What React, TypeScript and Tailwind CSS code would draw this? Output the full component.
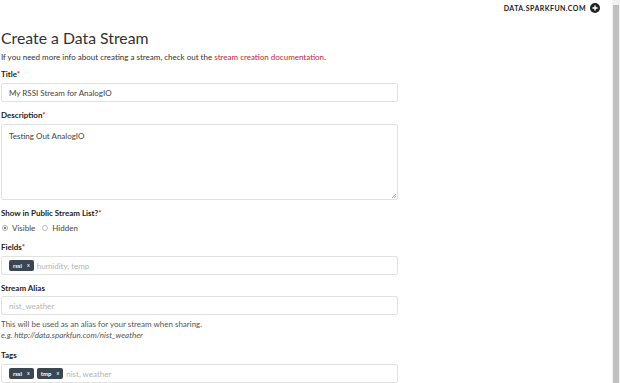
import { type ReactNode } from 'react';

const FONT = { fontFamily: 'Lato, "Noto Sans", sans-serif' };

function Label({ children, required }: { children: ReactNode; required?: boolean }) {
  return (
    <div className="text-[8px] font-bold leading-[10px] text-[#222]">
      {children}
      {required ? <span className="text-[#d9261c]">*</span> : null}
    </div>
  );
}

function Tag({ name }: { name: string }) {
  return (
    <span className="flex h-[11px] items-center gap-[5px] rounded-[2px] bg-[#3b4650] px-[4px] text-[6px] font-bold leading-none text-white">
      {name}
      <span className="text-[5.5px] font-normal">x</span>
    </span>
  );
}

function TagBox({ tags, placeholder }: { tags: string[]; placeholder: string }) {
  return (
    <div className="flex h-[19px] w-[397px] items-center gap-[3px] rounded-[2px] border border-[#e2e2e2] px-[7px]">
      {tags.map((t) => (
        <Tag key={t} name={t} />
      ))}
      <span className="text-[8px] text-[#b5b5b5]">{placeholder}</span>
    </div>
  );
}

export default function App() {
  return (
    <div className="relative flex h-[383px] w-[620px] overflow-hidden bg-white" style={FONT}>
      <div className="flex-1">
        <div className="flex h-[15px] items-center justify-end gap-[4px] pr-[12px] pt-[1px]">
          <span className="text-[7px] font-bold tracking-[0.45px] text-[#222]">DATA.SPARKFUN.COM</span>
          <svg width="10" height="10" viewBox="0 0 10 10">
            <circle cx="5" cy="5" r="5" fill="#222" />
            <path d="M5 2.4v5.2M2.4 5h5.2" stroke="#fff" strokeWidth="1.5" />
          </svg>
        </div>
        <div className="pl-[1px]">
          <h1 className="mt-[12px] text-[15.8px] font-normal leading-[22px] text-[#333]">Create a Data Stream</h1>
          <p className="mt-[3px] text-[8px] leading-[10px] text-[#333]">
            If you need more info about creating a stream, check out the{' '}
            <span className="text-[#c0272d]">stream creation documentation</span>.
          </p>

          <div className="mt-[7px]">
            <Label required>Title</Label>
          </div>
          <div className="mt-[4px] flex h-[19px] w-[397px] items-center rounded-[2px] border border-[#e2e2e2] px-[7px] text-[8px] text-[#444]">
            My RSSI Stream for AnalogIO
          </div>

          <div className="mt-[8px]">
            <Label required>Description</Label>
          </div>
          <div className="relative mt-[4px] h-[76px] w-[397px] rounded-[2px] border border-[#e2e2e2] px-[7px] pt-[5px] text-[8px] text-[#444]">
            Testing Out AnalogIO
            <svg className="absolute bottom-[1px] right-[1px]" width="5" height="5" viewBox="0 0 5 5">
              <path d="M5 1L1 5M5 3L3 5" stroke="#999" strokeWidth="0.8" />
            </svg>
          </div>

          <div className="mt-[8px]">
            <Label required>Show in Public Stream List?</Label>
          </div>
          <div className="mt-[5px] flex items-center gap-[4px] text-[8px] leading-[10px] text-[#444]">
            <span className="ml-[1px] flex h-[6px] w-[6px] items-center justify-center rounded-full border border-[#aaa]">
              <span className="h-[2px] w-[2px] rounded-full bg-[#555]" />
            </span>
            <span>Visible</span>
            <span className="ml-[3px] h-[6px] w-[6px] rounded-full border border-[#bbb]" />
            <span>Hidden</span>
          </div>

          <div className="mt-[9px]">
            <Label required>Fields</Label>
          </div>
          <div className="mt-[4px]">
            <TagBox tags={['rssi']} placeholder="humidity, temp" />
          </div>

          <div className="mt-[8px]">
            <Label>Stream Alias</Label>
          </div>
          <div className="mt-[3px] flex h-[19px] w-[397px] items-center rounded-[2px] border border-[#e2e2e2] px-[7px] text-[8px] text-[#b5b5b5]">
            nist_weather
          </div>
          <p className="mt-[4px] text-[8px] leading-[11px] text-[#555]">
            This will be used as an alias for your stream when sharing.
          </p>
          <p className="text-[8px] italic leading-[11px] text-[#555]">e.g. http://data.sparkfun.com/nist_weather</p>

          <div className="mt-[9px]">
            <Label>Tags</Label>
          </div>
          <div className="mt-[4px]">
            <TagBox tags={['rssi', 'tmp']} placeholder="nist, weather" />
          </div>
        </div>
      </div>
      <div className="flex w-[8px] flex-col items-center bg-[#f1f1f1]">
        <div className="h-[5px] w-full" />
        <div className="w-[6px] flex-1 bg-[#c1c1c1]" />
      </div>
    </div>
  );
}
